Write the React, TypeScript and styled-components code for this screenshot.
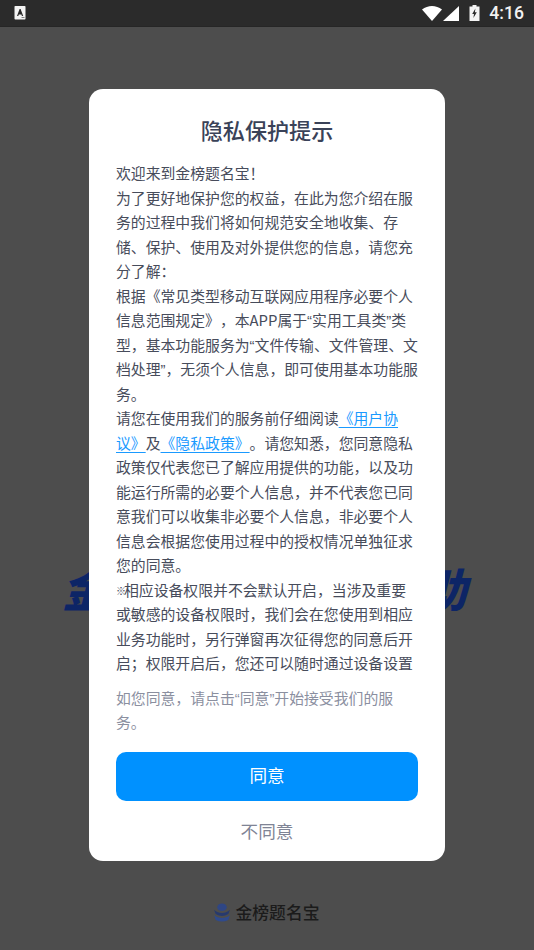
import React from "react";
import styled, { createGlobalStyle } from "styled-components";

const cjk = `"Noto Sans CJK SC", "Noto Sans", sans-serif`;

const Global = createGlobalStyle`
  html, body { margin: 0; padding: 0; background: #4d4d4d; }
  * { box-sizing: border-box; }
`;

const Screen = styled.div`
  position: relative;
  width: 534px;
  height: 950px;
  overflow: hidden;
  display: flex;
  flex-direction: column;
  background: #4d4d4d;
  font-family: ${cjk};
`;

const StatusBar = styled.header`
  height: 27px;
  flex: none;
  display: flex;
  align-items: center;
  padding: 0 10px 0 14px;
  background: #2b2b2b;
  border-bottom: 1px solid #262626;
  color: #fff;
`;

const StatusIcons = styled.div`
  margin-left: auto;
  display: flex;
  align-items: center;
  gap: 1px;
`;

const BatterySlot = styled.span`
  display: flex;
  margin-left: 9px;
`;

const Clock = styled.span`
  margin-left: 8px;
  font-family: Roboto, "Liberation Sans", sans-serif;
  font-weight: 500;
  font-size: 17.6px;
  color: #f2f2f2;
`;

const Splash = styled.main`
  flex: 1;
  display: flex;
  flex-direction: column;
  align-items: center;
`;

const Hero = styled.div`
  margin-top: 533px;
  margin-left: -4px;
  width: 406px;
  height: 56px;
  line-height: 56px;
  font-size: 45px;
  font-weight: 900;
  font-style: italic;
  white-space: nowrap;
  color: #0d2566;
`;

const Brand = styled.div`
  margin-top: 284px;
  margin-left: -3px;
  display: flex;
  align-items: center;
  gap: 4px;
  height: 24px;
  font-size: 16.8px;
  font-weight: 500;
  color: #1b1b1b;
`;

const Dialog = styled.section`
  position: absolute;
  left: 89px;
  top: 89px;
  width: 356px;
  height: 772px;
  padding: 0 27px;
  background: #fff;
  border-radius: 14px;
  display: flex;
  flex-direction: column;
`;

const Title = styled.h1`
  margin: 24px 0 0;
  height: 32px;
  line-height: 32px;
  text-align: center;
  font-size: 22.1px;
  font-weight: 500;
  color: #3a4258;
`;

const Body = styled.div`
  margin-top: 16px;
  width: 303px;
  font-size: 14.85px;
  line-height: 24.5px;
  color: #474c5b;
  text-spacing-trim: space-all;
`;

const Para = styled.p`
  margin: 0;
`;

const LegalLink = styled.a`
  color: #1a9aff;
  text-decoration: underline;
  text-underline-offset: 3px;
  text-decoration-thickness: 1px;
`;

const Quote = styled.span`
  font-family: "Liberation Sans", sans-serif;
  line-height: 0;
`;

const RefMark = styled.span`
  font-size: 10px;
  font-weight: 700;
  line-height: 0;
  letter-spacing: -2px;
  vertical-align: 1px;
`;

const Note = styled.p`
  margin: 10px 0 0;
  font-size: 14.85px;
  line-height: 24.5px;
  color: #8b8f9f;
  text-spacing-trim: space-all;
`;

const Agree = styled.button`
  margin-top: 17px;
  height: 49px;
  flex: none;
  border: 0;
  padding: 0 0 3px;
  border-radius: 10px;
  background: #0091ff;
  color: #fff;
  font-family: ${cjk};
  font-size: 17.6px;
`;

const Decline = styled.button`
  margin-top: 16px;
  height: 28px;
  flex: none;
  border: 0;
  padding: 0;
  background: transparent;
  color: #7f8495;
  font-family: ${cjk};
  font-size: 17.6px;
`;

const NotificationIcon = () => (
  <svg width="12" height="14" viewBox="0 0 12 14">
    <rect x="0.5" width="11" height="13.5" rx="0.8" fill="#f4f4f4" />
    <path d="M3 10 L5.6 3 H6.6 L9.2 10 H7.9 L7.4 8.5 H4.8 L4.3 10 Z" fill="#2b2b2b" />
    <rect x="7.5" y="11" width="3" height="1" fill="#888" />
  </svg>
);

const WifiIcon = () => (
  <svg width="20" height="15" viewBox="0 0 20 15">
    <path d="M0 3.6 C5.8 -1.2 14.2 -1.2 20 3.6 L10 15 Z" fill="#fff" />
  </svg>
);

const SignalIcon = () => (
  <svg width="16" height="15" viewBox="0 0 16 15">
    <path d="M16 0 V15 H0 Z" fill="#fff" />
  </svg>
);

const BatteryIcon = () => (
  <svg width="11" height="16" viewBox="0 0 11 16">
    <path d="M3.5 0 H7.5 V1.5 H10.5 V16 H0.5 V1.5 H3.5 Z" fill="#f4f4f4" />
    <path d="M6.4 3.4 L3.2 9 H5 L4.4 13 L7.8 7.2 H5.9 Z" fill="#2b2b2b" />
  </svg>
);

const BrandMark = () => (
  <svg width="20" height="19" viewBox="0 0 18 18">
    <ellipse cx="9" cy="4" rx="4.5" ry="3.6" fill="#2f4684" />
    <path d="M1.5 6.5 C6 10.5 12 10.5 16.5 6.5 L15 10.5 C11 13 7 13 3 10.5 Z" fill="#26396e" />
    <path d="M1.5 11.5 C6 15 12 15 16.5 11.5 L15 16 C11 18 7 18 3 16 Z" fill="#2f4a8c" />
  </svg>
);

export default function App() {
  return (
    <>
      <Global />
      <Screen>
        <StatusBar>
          <NotificationIcon />
          <StatusIcons>
            <WifiIcon />
            <SignalIcon />
            <BatterySlot>
              <BatteryIcon />
            </BatterySlot>
            <Clock>4:16</Clock>
          </StatusIcons>
        </StatusBar>
        <Splash>
          <Hero>金榜题名宝文档小助</Hero>
          <Brand>
            <BrandMark />
            金榜题名宝
          </Brand>
        </Splash>
        <Dialog>
          <Title>隐私保护提示</Title>
          <Body>
            <Para>欢迎来到金榜题名宝！</Para>
            <Para>为了更好地保护您的权益，在此为您介绍在服务的过程中我们将如何规范安全地收集、存储、保护、使用及对外提供您的信息，请您充分了解：</Para>
            <Para>
              根据《常见类型移动互联网应用程序必要个人信息范围规定》，本APP属于<Quote>“</Quote>实用工具类<Quote>”</Quote>类型，基本功能服务为<Quote>“</Quote>文件传输、文件管理、文档处理<Quote>”</Quote>，无须个人信息，即可使用基本功能服务。
            </Para>
            <Para>
              请您在使用我们的服务前仔细阅读<LegalLink>《用户协议》</LegalLink>及<LegalLink>《隐私政策》</LegalLink>。请您知悉，您同意隐私政策仅代表您已了解应用提供的功能，以及功能运行所需的必要个人信息，并不代表您已同意我们可以收集非必要个人信息，非必要个人信息会根据您使用过程中的授权情况单独征求您的同意。
            </Para>
            <Para>
              <RefMark>※</RefMark>相应设备权限并不会默认开启，当涉及重要或敏感的设备权限时，我们会在您使用到相应业务功能时，另行弹窗再次征得您的同意后开启；权限开启后，您还可以随时通过设备设置
            </Para>
          </Body>
          <Note>
            如您同意，请点击<Quote>“</Quote>同意<Quote>”</Quote>开始接受我们的服务。
          </Note>
          <Agree>同意</Agree>
          <Decline>不同意</Decline>
        </Dialog>
      </Screen>
    </>
  );
}
